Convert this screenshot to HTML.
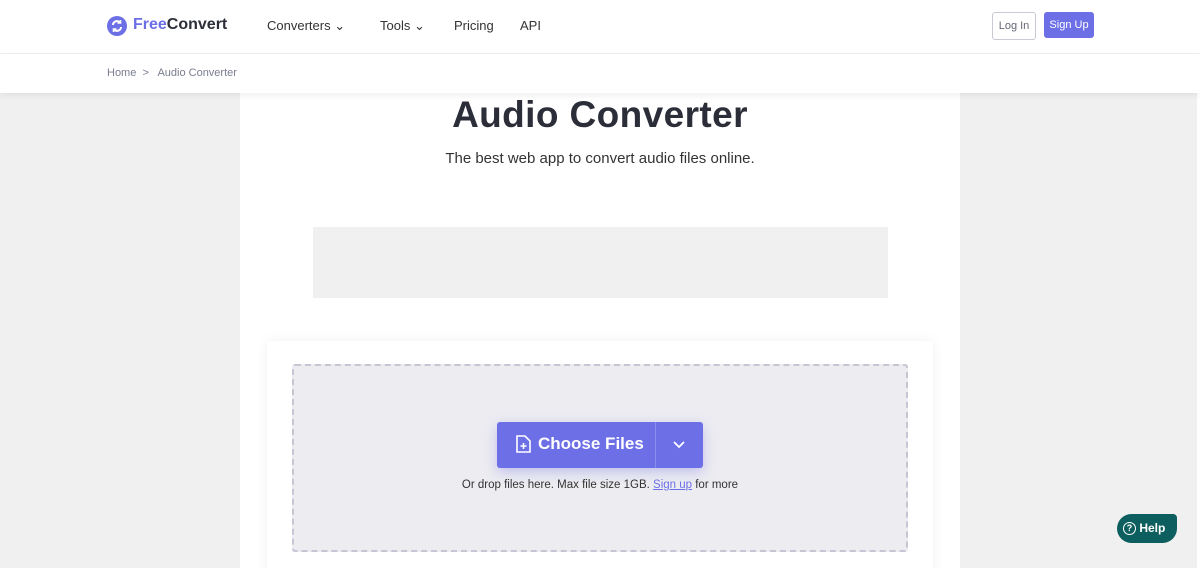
<!DOCTYPE html>
<html><head><meta charset="utf-8"><style>
*{margin:0;padding:0;box-sizing:border-box}
html,body{width:1200px;height:568px;overflow:hidden}
body{background:#f0f0f0;font-family:"Liberation Sans",sans-serif;position:relative}
.hdr{position:absolute;left:0;top:0;width:1200px;height:54px;background:#fff;border-bottom:1px solid #eee}
.bc{position:absolute;left:0;top:54px;width:1200px;height:39px;background:#fff;box-shadow:0 3px 6px rgba(0,0,0,.06);z-index:2}
.rs{position:absolute;right:0;top:93px;width:3px;height:475px;background:#fff}
.main{position:absolute;left:240px;top:93px;width:720px;height:475px;background:#fff;overflow:hidden}
.t{position:absolute;left:0;width:1200px;text-align:center}
</style></head><body>
<div class="hdr">
<svg style="position:absolute;left:107px;top:16px" width="20" height="20" viewBox="0 0 20 20"><circle cx="10" cy="10" r="10" fill="#6c6fe6"/><path d="M6 9a4 4 0 0 1 7-2.5M14 11a4 4 0 0 1-7 2.5" stroke="#fff" stroke-width="2" fill="none"/><path d="M13.5 4v3h-3M6.5 16v-3h3" stroke="#fff" stroke-width="1.6" fill="none"/></svg>
<div style="position:absolute;left:133px;top:16px;font-size:16px;font-weight:bold;color:#2b2d38"><span style="color:#6c6fe6">Free</span>Convert</div>
<div style="position:absolute;left:267px;top:18px;font-size:13px;color:#333">Converters &#8964;</div>
<div style="position:absolute;left:380px;top:18px;font-size:13px;color:#333">Tools &#8964;</div>
<div style="position:absolute;left:454px;top:18px;font-size:13px;color:#333">Pricing</div>
<div style="position:absolute;left:520px;top:18px;font-size:13px;color:#333">API</div>
<div style="position:absolute;left:992px;top:12px;width:44px;height:28px;border:1px solid #c8cad4;border-radius:3px;font-size:11px;color:#667;text-align:center;line-height:26px">Log In</div>
<div style="position:absolute;left:1044px;top:12px;width:50px;height:26px;background:#6c6fe6;border-radius:3px;font-size:11px;color:#fff;text-align:center;line-height:26px">Sign Up</div>
</div>
<div class="bc"><div style="position:absolute;left:107px;top:13px;font-size:11px;color:#7a7d90">Home &nbsp;&gt;&nbsp;&nbsp; Audio Converter</div></div>
<div class="rs"></div>
<div class="main">
<div style="position:absolute;left:73px;top:134px;width:575px;height:71px;background:#f0f0f0"></div>
<div style="position:absolute;left:27px;top:248px;width:666px;height:240px;background:#fff;box-shadow:0 0 12px rgba(0,0,0,.06)"></div>
<div style="position:absolute;left:52px;top:271px;width:616px;height:188px;background:#ececf1;border:2px dashed #c5c5d3;border-radius:3px"></div>
</div>
<div class="t" style="top:94px;font-size:37px;font-weight:bold;color:#2b2d38;letter-spacing:0.4px">Audio Converter</div>
<div class="t" style="top:150px;font-size:15px;color:#333">The best web app to convert audio files online.</div>
<div style="position:absolute;left:497px;top:422px;width:206px;height:46px;background:#6c6fe6;border-radius:3px;box-shadow:0 4px 12px rgba(108,111,230,.35)">
<svg style="position:absolute;left:18px;top:13px" width="16" height="19" viewBox="0 0 16 19"><path d="M2 1h8l5 5v11H2z" stroke="#fff" stroke-width="1.6" fill="none"/><path d="M8.5 8v6M5.5 11h6" stroke="#fff" stroke-width="1.6"/></svg>
<div style="position:absolute;left:41px;top:12px;font-size:17px;font-weight:bold;color:#fff">Choose Files</div>
<div style="position:absolute;left:158px;top:0;width:1px;height:46px;background:#8a8cf0"></div>
<svg style="position:absolute;left:176px;top:19px" width="12" height="8" viewBox="0 0 12 8"><path d="M1 1l5 5 5-5" stroke="#fff" stroke-width="1.8" fill="none"/></svg>
</div>
<div class="t" style="top:479px;font-size:11.5px;color:#333">Or drop files here. Max file size 1GB. <span style="color:#6c6fe6;text-decoration:underline">Sign up</span> for more</div>
<div style="position:absolute;left:1117px;top:514px;width:60px;height:29px;background:#0d5e5e;border-radius:15px 4px 15px 15px;color:#fff;font-size:12px;font-weight:bold;line-height:29px;padding-left:6px;white-space:nowrap">
<span style="display:inline-block;width:13px;height:13px;border:1.5px solid #fff;border-radius:50%;font-size:9px;line-height:10px;text-align:center;vertical-align:middle">?</span> Help</div>
</body></html>
